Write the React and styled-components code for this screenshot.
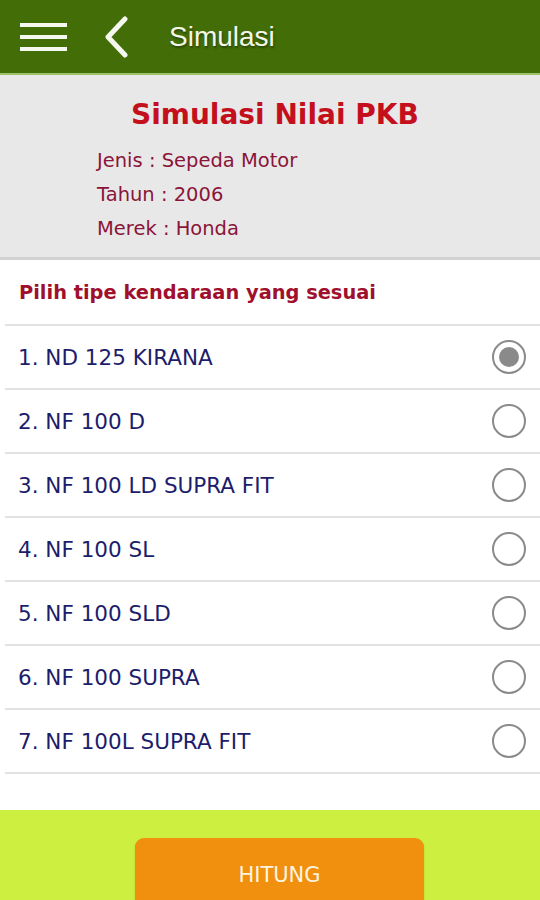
import { useState } from "react"
import styled, { createGlobalStyle } from "styled-components"

const Global = createGlobalStyle`
  body {
    margin: 0;
    background: #ffffff;
    font-family: "DejaVu Sans", Verdana, sans-serif;
  }
`

const Page = styled.div`
  width: 540px;
  height: 900px;
  display: flex;
  flex-direction: column;
  overflow: hidden;
  background: #ffffff;
`

const TopBar = styled.div`
  height: 75px;
  background: #436d07;
  border-bottom: 2px solid #9cc26a;
  display: flex;
  align-items: center;
  padding-left: 20px;
  box-sizing: border-box;
  flex-shrink: 0;
`

const IconBtn = styled.div`
  display: flex;
  align-items: center;
  margin-right: ${p => p.gap}px;
`

const BarTitle = styled.div`
  color: #f2f7ea;
  font-family: "Liberation Sans", Arial, sans-serif;
  font-size: 28px;
  text-shadow: 1px 2px 2px rgba(0, 0, 0, 0.35);
`

const InfoPanel = styled.div`
  background: #e8e8e8;
  border-bottom: 3px solid #d2d2d2;
  padding: 23px 0 11px 97px;
  flex-shrink: 0;
`

const Title = styled.div`
  color: #c4101c;
  font-weight: bold;
  font-size: 28px;
  margin: 0 0 13px 34px;
`

const InfoLine = styled.div`
  color: #8a1538;
  font-size: 19.5px;
  line-height: 34px;
`

const Prompt = styled.div`
  color: #a0102c;
  font-weight: bold;
  font-size: 19.4px;
  padding: 21px 0 20px 14px;
  border-bottom: 2px solid #e2e2e2;
  margin-left: 5px;
`

const List = styled.div`
  margin-left: 5px;
`

const Row = styled.label`
  height: 62px;
  display: flex;
  align-items: center;
  justify-content: space-between;
  padding: 0 14px 0 13px;
  border-bottom: 2px solid #e2e2e2;
  cursor: pointer;
`

const RowText = styled.span`
  color: #1d1d6b;
  font-size: 21.5px;
`

const Radio = styled.span`
  width: 34px;
  height: 34px;
  box-sizing: border-box;
  border-radius: 50%;
  border: 2px solid #8a8a8a;
  display: flex;
  align-items: center;
  justify-content: center;
  &::after {
    content: "";
    width: 20px;
    height: 20px;
    border-radius: 50%;
    background: ${p => (p.checked ? "#8a8a8a" : "transparent")};
  }
`

const Footer = styled.div`
  margin-top: auto;
  height: 90px;
  background: #cdef3f;
  display: flex;
  padding: 28px 0 0 135px;
  box-sizing: border-box;
  flex-shrink: 0;
`

const Button = styled.button`
  width: 289px;
  height: 80px;
  border: none;
  border-radius: 9px 9px 0 0;
  background: #f0900e;
  color: #fdf4e0;
  font-family: "DejaVu Sans", Verdana, sans-serif;
  font-size: 21px;
  display: flex;
  justify-content: center;
  align-items: flex-start;
  padding: 24px 0 0;
  line-height: 26px;
  box-shadow: 0 1px 2px rgba(0, 0, 0, 0.15);
`

const types = [
  "ND 125 KIRANA",
  "NF 100 D",
  "NF 100 LD SUPRA FIT",
  "NF 100 SL",
  "NF 100 SLD",
  "NF 100 SUPRA",
  "NF 100L SUPRA FIT",
]

export default function App() {
  const [selected, setSelected] = useState(0)
  return (
    <Page>
      <Global />
      <TopBar>
        <IconBtn gap={36}>
          <svg width="47" height="30" viewBox="0 0 47 30">
            <rect x="0" y="1" width="47" height="4" fill="#f4f8ee" />
            <rect x="0" y="13" width="47" height="4" fill="#f4f8ee" />
            <rect x="0" y="25" width="47" height="4" fill="#f4f8ee" />
          </svg>
        </IconBtn>
        <IconBtn gap={40}>
          <svg width="26" height="42" viewBox="0 0 26 42">
            <path d="M22 3 L5 21 L22 39" fill="none" stroke="#f4f8ee" strokeWidth="5" strokeLinecap="round" strokeLinejoin="round" />
          </svg>
        </IconBtn>
        <BarTitle>Simulasi</BarTitle>
      </TopBar>
      <InfoPanel>
        <Title>Simulasi Nilai PKB</Title>
        <InfoLine>Jenis : Sepeda Motor</InfoLine>
        <InfoLine>Tahun : 2006</InfoLine>
        <InfoLine>Merek : Honda</InfoLine>
      </InfoPanel>
      <Prompt>Pilih tipe kendaraan yang sesuai</Prompt>
      <List>
        {types.map((t, i) => (
          <Row key={t} onClick={() => setSelected(i)}>
            <RowText>{i + 1}. {t}</RowText>
            <Radio checked={selected === i} />
          </Row>
        ))}
      </List>
      <Footer>
        <Button>HITUNG</Button>
      </Footer>
    </Page>
  )
}
